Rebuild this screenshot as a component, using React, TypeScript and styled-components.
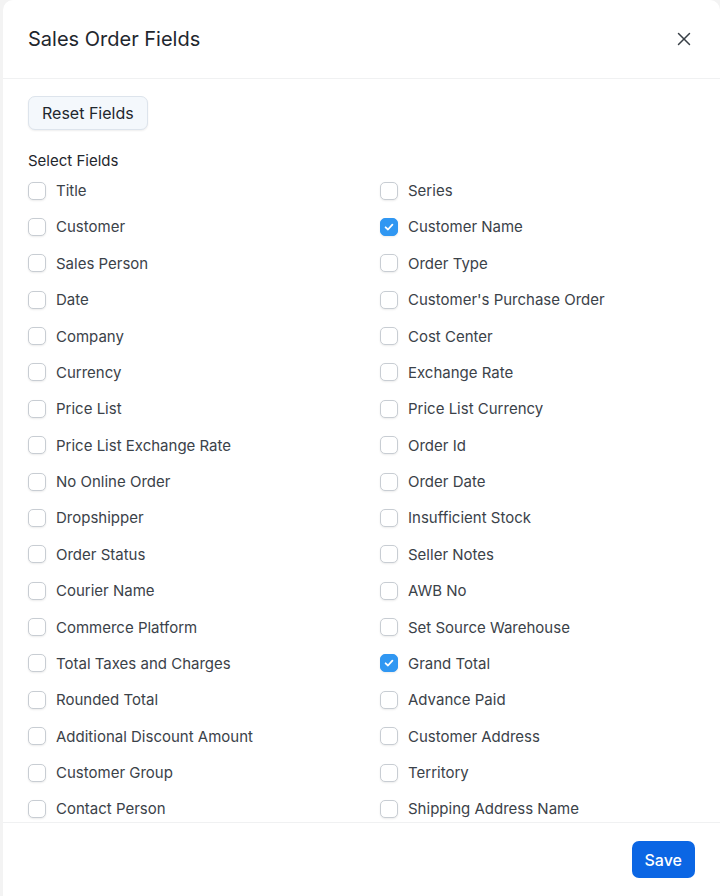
import styled, { createGlobalStyle } from "styled-components";
import { X } from "lucide-react";

const GlobalStyle = createGlobalStyle`
  html, body {
    margin: 0;
    padding: 0;
    background: #f3f3f3;
    font-family: Inter, "Noto Sans", "Liberation Sans", sans-serif;
  }
`;

const leftFields = [
  "Title", "Customer", "Sales Person", "Date", "Company", "Currency", "Price List",
  "Price List Exchange Rate", "No Online Order", "Dropshipper", "Order Status",
  "Courier Name", "Commerce Platform", "Total Taxes and Charges", "Rounded Total",
  "Additional Discount Amount", "Customer Group", "Contact Person",
];

const rightFields = [
  "Series", "Customer Name", "Order Type", "Customer's Purchase Order", "Cost Center",
  "Exchange Rate", "Price List Currency", "Order Id", "Order Date", "Insufficient Stock",
  "Seller Notes", "AWB No", "Set Source Warehouse", "Grand Total", "Advance Paid",
  "Customer Address", "Territory", "Shipping Address Name",
];

const checked = ["Customer Name", "Grand Total"];

const Check = ({ on }: { on: boolean }) => (
  <Box on={on}>
    {on && (
      <svg width="12" height="12" viewBox="0 0 12 12">
        <path d="M2.6 6.3 L5 8.5 L9.4 3.6" fill="none" stroke="#fff" strokeWidth="1.8" strokeLinecap="round" strokeLinejoin="round" />
      </svg>
    )}
  </Box>
);

const App = () => {
  const rows = leftFields.flatMap((l, i) => [l, rightFields[i]]);
  return (
    <>
      <GlobalStyle />
      <Modal>
        <Header>
          <Title>Sales Order Fields</Title>
          <CloseBtn><X size={22} strokeWidth={1.6} /></CloseBtn>
        </Header>
        <Body>
          <ResetButton>Reset Fields</ResetButton>
          <SectionLabel>Select Fields</SectionLabel>
          <FieldGrid>
            {rows.map((f) => (
              <Field key={f}>
                <Check on={checked.includes(f)} />
                <FieldLabel>{f}</FieldLabel>
              </Field>
            ))}
          </FieldGrid>
        </Body>
        <Footer>
          <SaveButton>Save</SaveButton>
        </Footer>
      </Modal>
    </>
  );
};

const Modal = styled.div`
  margin-left: 3px;
  height: 896px;
  background: #fff;
  border-radius: 10px 10px 0 0;
  display: flex;
  flex-direction: column;
  overflow: hidden;
`;

const Header = styled.div`
  height: 78px;
  flex-shrink: 0;
  display: flex;
  align-items: center;
  justify-content: space-between;
  padding: 0 25px 0 25px;
  border-bottom: 1px solid #f0f1f2;
`;

const Title = styled.h2`
  margin: 0;
  font-size: 20px;
  font-weight: 400;
  color: #1f272e;
`;

const CloseBtn = styled.div`
  display: flex;
  color: #383f46;
`;

const Body = styled.div`
  flex: 1;
  overflow: hidden;
  padding: 17px 25px 0;
`;

const ResetButton = styled.button`
  height: 34px;
  padding: 0 13px;
  border: 1px solid #dde4ec;
  border-radius: 7px;
  background: #f4f8fc;
  font-family: inherit;
  font-size: 16px;
  color: #1f272e;
  box-shadow: 0 1px 2px rgba(0, 0, 0, 0.07);
`;

const SectionLabel = styled.div`
  margin-top: 21px;
  font-size: 15px;
  line-height: 20px;
  color: #1f272e;
`;

const FieldGrid = styled.div`
  display: grid;
  grid-template-columns: 352px 1fr;
  grid-auto-rows: 36.38px;
  margin-top: 1.4px;
`;

const Field = styled.label`
  display: flex;
  align-items: center;
  gap: 10px;
`;

const Box = styled.span<{ on: boolean }>`
  width: 18px;
  height: 18px;
  box-sizing: border-box;
  border-radius: 5px;
  display: flex;
  align-items: center;
  justify-content: center;
  border: 1px solid ${(p) => (p.on ? "#3097f2" : "#c8cdd3")};
  background: ${(p) => (p.on ? "#3097f2" : "#fff")};
  box-shadow: 0 1px 2px rgba(0, 0, 0, 0.08);
`;

const FieldLabel = styled.span`
  font-size: 15px;
  color: #3b4249;
`;

const Footer = styled.div`
  height: 74px;
  flex-shrink: 0;
  border-top: 1px solid #f0f1f2;
  display: flex;
  justify-content: flex-end;
  align-items: flex-start;
  padding: 18px 25px 0;
  box-sizing: border-box;
`;

const SaveButton = styled.button`
  height: 37px;
  padding: 0 13px;
  border: none;
  border-radius: 7px;
  background: #0b66e4;
  color: #fff;
  font-family: inherit;
  font-size: 16px;
  font-weight: 500;
`;

export default App;
